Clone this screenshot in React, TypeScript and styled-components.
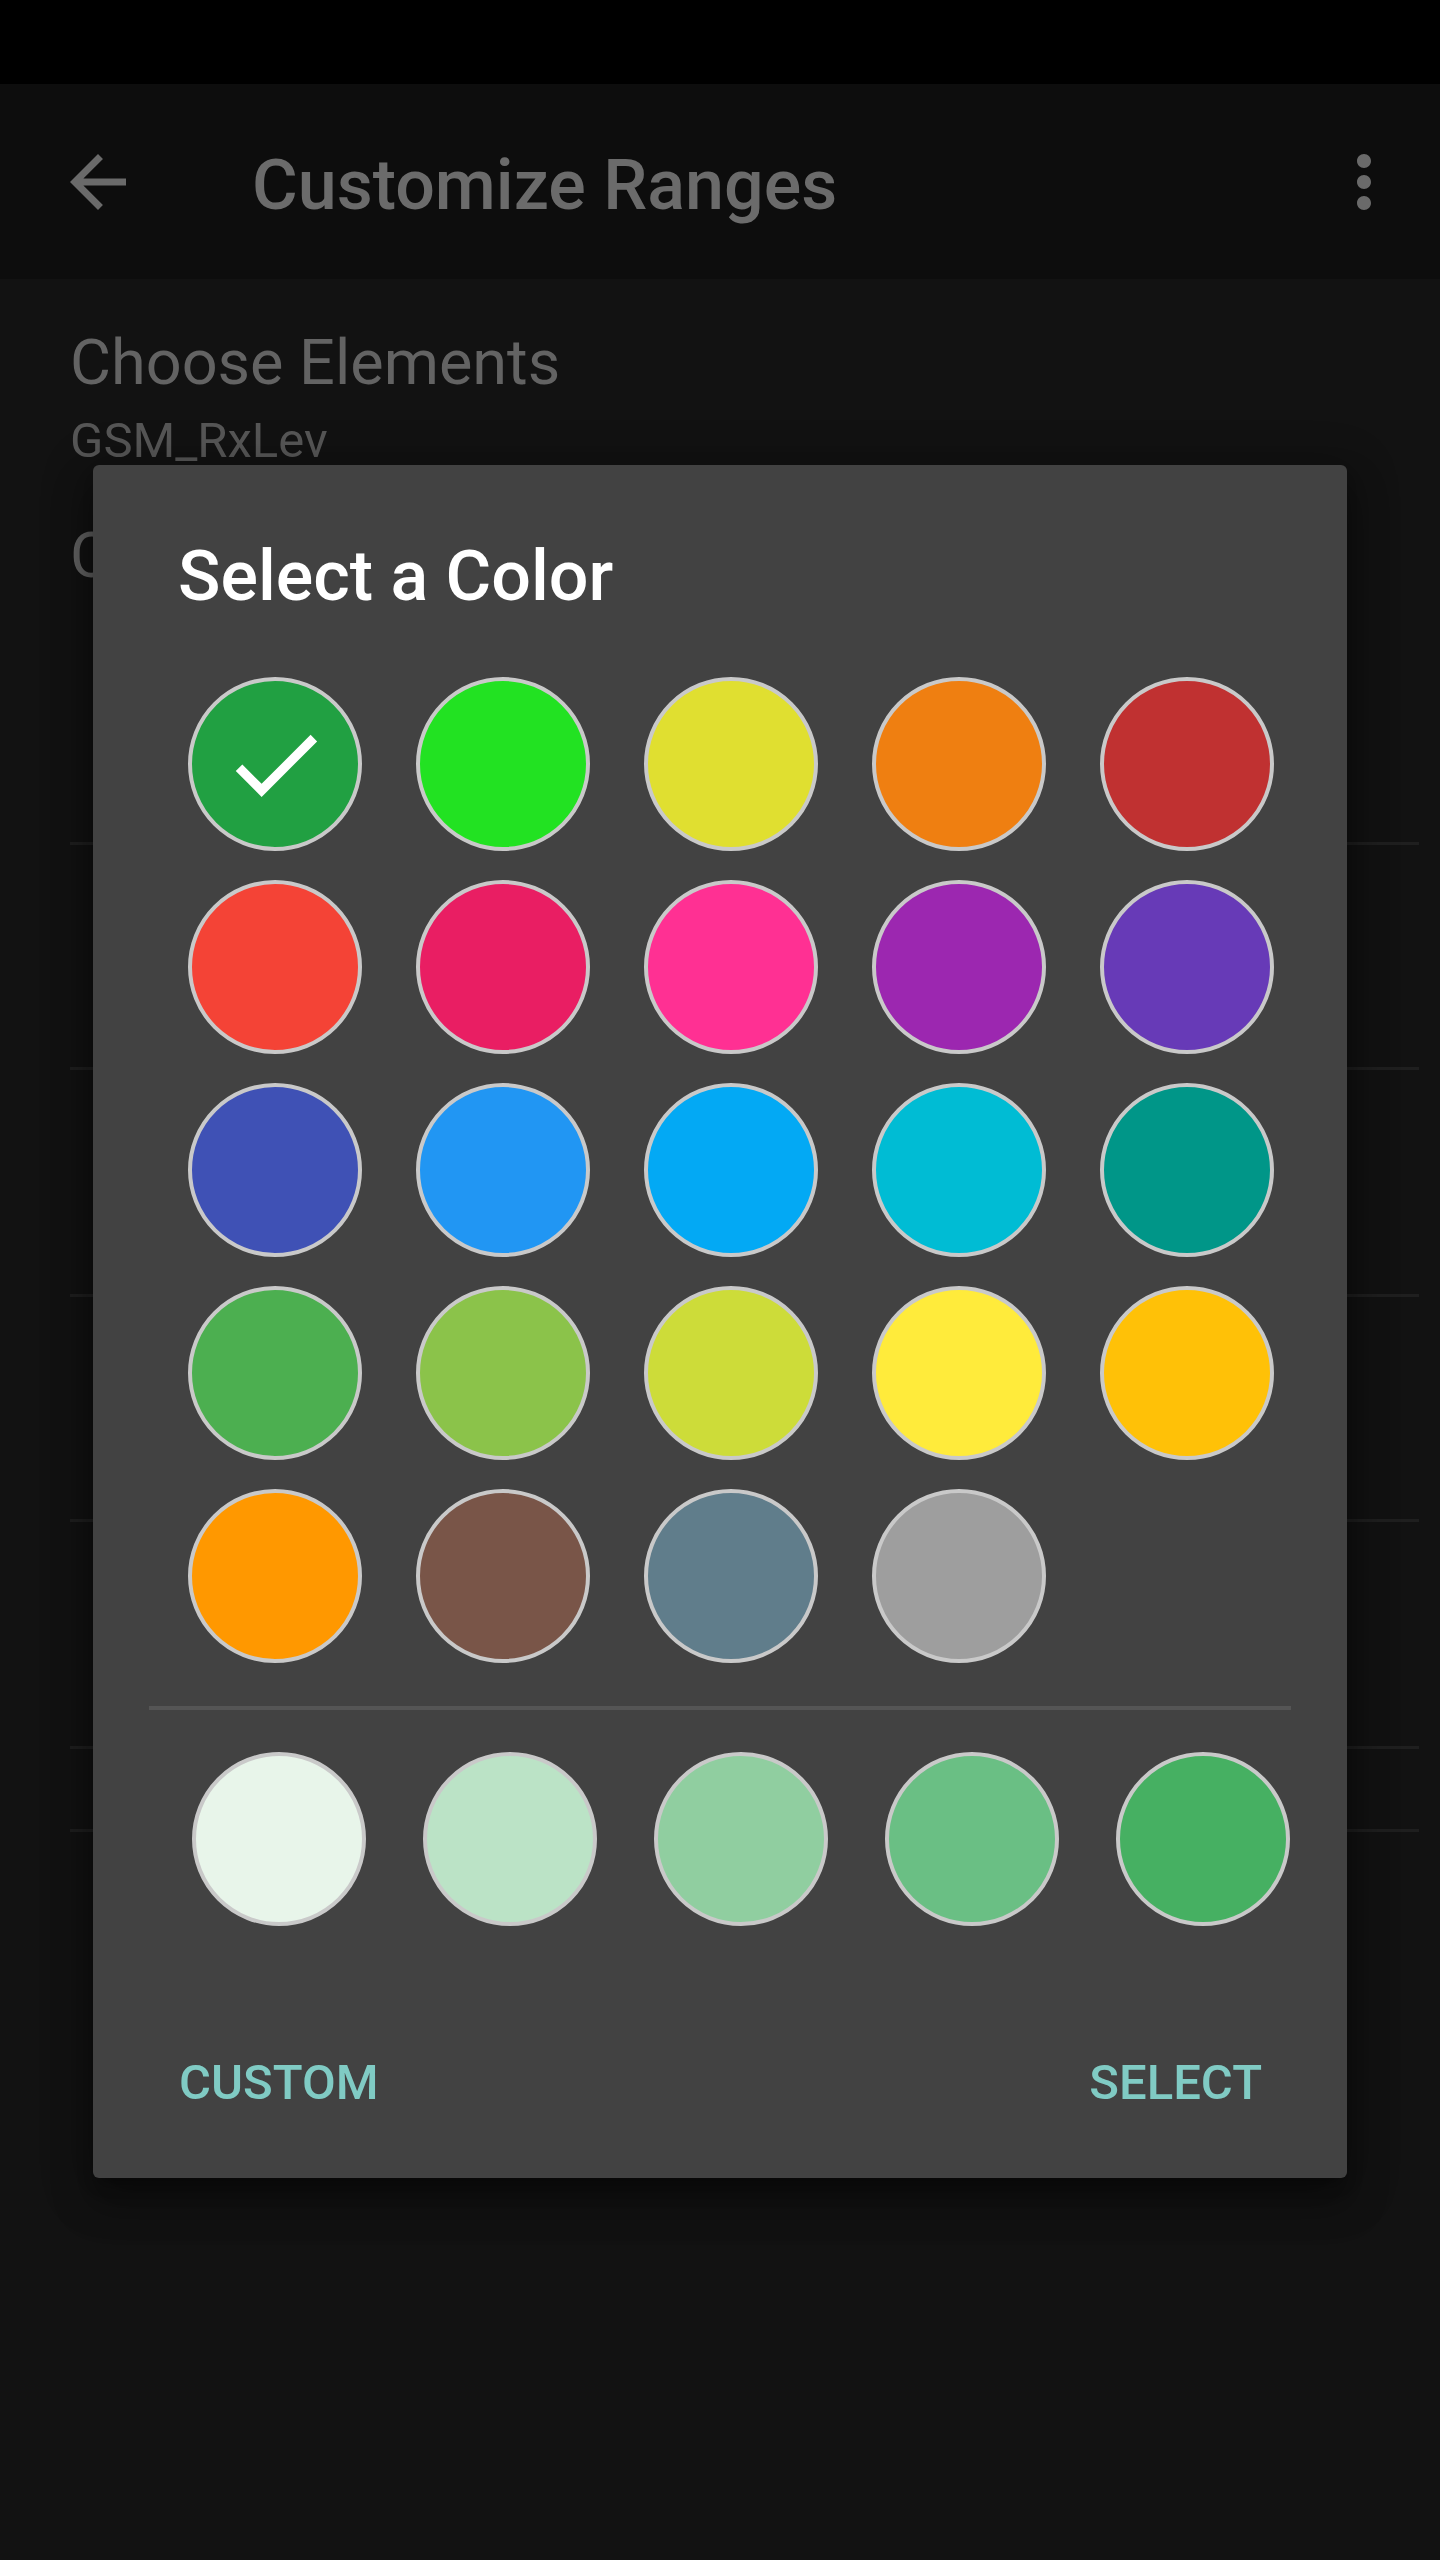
import React from "react";
import styled, { createGlobalStyle } from "styled-components";

const GlobalStyle = createGlobalStyle`
  html, body {
    margin: 0;
    padding: 0;
    background: #121212;
  }
  body {
    font-family: Roboto, "Noto Sans", "Liberation Sans", sans-serif;
  }
  * { box-sizing: border-box; }
`;

const Screen = styled.div`
  position: relative;
  width: 1440px;
  height: 2560px;
  background: #121212;
  overflow: hidden;
`;

const StatusBar = styled.div`
  height: 84px;
  background: #000000;
`;

const Toolbar = styled.header`
  height: 195px;
  background: #0d0d0d;
  display: flex;
  align-items: center;
  padding: 0 34px 0 56px;
`;

const IconButton = styled.div`
  width: 84px;
  height: 84px;
  display: flex;
  align-items: center;
  justify-content: center;
  color: #6a6a6a;
  flex-shrink: 0;
`;

const ToolbarTitle = styled.h1`
  margin: 0 0 0 112px;
  flex: 1;
  font-size: 70px;
  line-height: 82px;
  font-weight: 500;
  color: #6b6b6b;
  padding-top: 6px;
`;

const Content = styled.main`
  padding: 0 21px 0 70px;
`;

const HeaderSection = styled.section`
  height: 563px;
  padding-top: 47px;
`;

const ItemTitle = styled.div<{ $gap?: number }>`
  font-size: 63px;
  line-height: 74px;
  color: #636363;
  margin-top: ${(p) => p.$gap ?? 0}px;
`;

const ItemSub = styled.div`
  margin-top: 12px;
  font-size: 49px;
  line-height: 57px;
  color: #565656;
`;

const RangeRow = styled.div<{ $h: number }>`
  height: ${(p) => p.$h}px;
  border-top: 3px solid #1f1f1f;
`;

const Dialog = styled.div`
  position: absolute;
  left: 93px;
  top: 465px;
  width: 1254px;
  background: #424242;
  border-radius: 6px;
  padding: 70px 0 67px;
  box-shadow: 0 24px 38px 3px rgba(0, 0, 0, 0.28),
    0 9px 46px 8px rgba(0, 0, 0, 0.22), 0 11px 15px -7px rgba(0, 0, 0, 0.3);
`;

const DialogTitle = styled.h2`
  margin: 0;
  padding-left: 85px;
  font-size: 70px;
  line-height: 82px;
  font-weight: 500;
  color: #ffffff;
`;

const SwatchGrid = styled.div<{ $cell: number; $left: number }>`
  display: grid;
  grid-template-columns: repeat(5, ${(p) => p.$cell}px);
  row-gap: 29px;
  justify-items: center;
  padding-left: ${(p) => p.$left}px;
`;

const Palette = styled(SwatchGrid)`
  margin-top: 60px;
`;

const Shades = styled(SwatchGrid)`
  margin-top: 42px;
`;

const Swatch = styled.div<{ $color: string }>`
  width: 174px;
  height: 174px;
  border-radius: 50%;
  border: 4px solid #c9c9c9;
  background: ${(p) => p.$color};
  display: flex;
  align-items: center;
  justify-content: center;
  color: #ffffff;
`;

const Divider = styled.hr`
  margin: 43px 0 0 56px;
  width: 1142px;
  height: 4px;
  border: none;
  background: #555555;
`;

const Actions = styled.div`
  margin-top: 128px;
  display: flex;
  justify-content: space-between;
  padding: 0 85px 0 86px;
`;

const ActionButton = styled.div`
  font-size: 49px;
  line-height: 57px;
  font-weight: 500;
  color: #80cbc4;
  text-transform: uppercase;
`;

const ArrowBack = () => (
  <svg width="84" height="84" viewBox="0 0 24 24" fill="currentColor">
    <path d="M20 11H7.83l5.59-5.59L12 4l-8 8 8 8 1.41-1.41L7.83 13H20v-2z" />
  </svg>
);

const MoreVert = () => (
  <svg width="84" height="84" viewBox="0 0 24 24" fill="currentColor">
    <path d="M12 8c1.1 0 2-.9 2-2s-.9-2-2-2-2 .9-2 2 .9 2 2 2zm0 2c-1.1 0-2 .9-2 2s.9 2 2 2 2-.9 2-2-.9-2-2-2zm0 6c-1.1 0-2 .9-2 2s.9 2 2 2 2-.9 2-2-.9-2-2-2z" />
  </svg>
);

const Check = () => (
  <svg width="111" height="111" viewBox="0 0 24 24" fill="currentColor">
    <path d="M9 16.17L4.83 12l-1.42 1.41L9 19 21 7l-1.41-1.41z" />
  </svg>
);

const palette = [
  "#21a042", "#22e222", "#e0df30", "#ef7f11", "#c03131",
  "#f44336", "#e91e63", "#ff3093", "#9c27b0", "#673ab7",
  "#3f51b5", "#2196f3", "#03a9f4", "#00bcd4", "#009688",
  "#4caf50", "#8bc34a", "#cddc39", "#ffeb3b", "#ffc107",
  "#ff9800", "#795548", "#607d8b", "#9e9e9e",
];

const shades = ["#e8f5ea", "#bbe3c6", "#90cea0", "#6abf84", "#46b062"];

const rowHeights = [225, 227, 225, 227, 83, 40];

export default function App() {
  return (
    <>
      <GlobalStyle />
      <Screen>
        <StatusBar />
        <Toolbar>
          <IconButton>
            <ArrowBack />
          </IconButton>
          <ToolbarTitle>Customize Ranges</ToolbarTitle>
          <IconButton>
            <MoreVert />
          </IconButton>
        </Toolbar>
        <Content>
          <HeaderSection>
            <ItemTitle>Choose Elements</ItemTitle>
            <ItemSub>GSM_RxLev</ItemSub>
            <ItemTitle $gap={50}>Choose Colors</ItemTitle>
          </HeaderSection>
          {rowHeights.map((h, i) => (
            <RangeRow key={i} $h={h} />
          ))}
        </Content>

        <Dialog>
          <DialogTitle>Select a Color</DialogTitle>
          <Palette $cell={228} $left={68}>
            {palette.map((c, i) => (
              <Swatch key={c} $color={c}>
                {i === 0 && <Check />}
              </Swatch>
            ))}
          </Palette>
          <Divider />
          <Shades $cell={231} $left={70}>
            {shades.map((c) => (
              <Swatch key={c} $color={c} />
            ))}
          </Shades>
          <Actions>
            <ActionButton>Custom</ActionButton>
            <ActionButton>Select</ActionButton>
          </Actions>
        </Dialog>
      </Screen>
    </>
  );
}
